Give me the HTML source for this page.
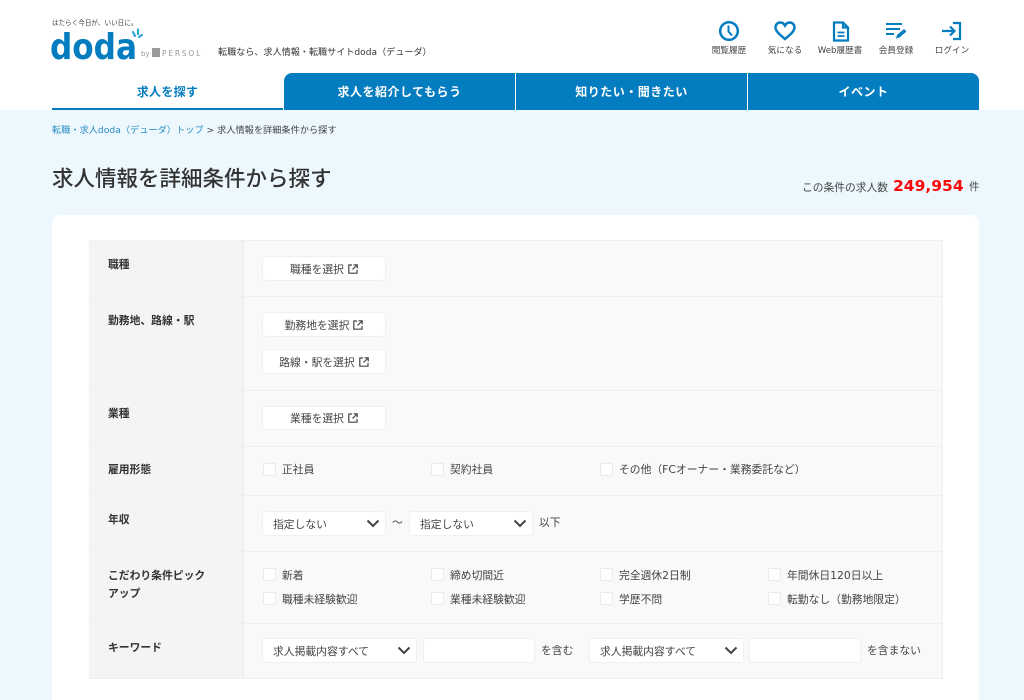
<!DOCTYPE html>
<html lang="ja">
<head>
<meta charset="utf-8">
<title>求人情報を詳細条件から探す</title>
<style>
*{box-sizing:border-box;margin:0;padding:0}
html,body{width:1024px;height:700px;overflow:hidden;background:#fff}
body{position:relative;font-family:"DejaVu Sans","Noto Sans CJK JP",sans-serif;color:#333}
.a{position:absolute;white-space:nowrap}
.bg{position:absolute;left:0;top:110px;width:1024px;height:590px;background:#ecf7fe}
.tab{position:absolute;top:73px;height:37px;background:#047cc0;color:#fff;font-size:12px;font-weight:700;text-align:center;line-height:38px;letter-spacing:.5px}
.hi{position:absolute;top:45px;font-size:8.6px;color:#444;text-align:center;line-height:12px;transform:translateX(-50%);white-space:nowrap}
.card{position:absolute;left:52px;top:215px;width:927px;height:485px;background:#fff;border-radius:8px 8px 0 0}
.table{position:absolute;left:89px;top:240px;width:854px;height:439px;background:#f9f9f9;border:1px solid #f0f0f0}
.th{position:absolute;left:89px;width:155px;background:#f4f4f4;border-right:1px solid #ebebeb}
.line{position:absolute;left:89px;width:854px;height:1px;background:#f0f0f0}
.lbl{position:absolute;left:108px;font-size:10.8px;font-weight:700;color:#333;line-height:17px;white-space:nowrap}
.btn{position:absolute;left:262px;width:124px;height:25px;background:#fff;border:1px solid #f0f0f0;border-radius:3px;font-size:10.8px;color:#444;text-align:center;line-height:25px;white-space:nowrap}
.btn svg{vertical-align:-1px;margin-left:4px}
.chk{position:absolute;width:13px;height:13px;background:#fff;border:1px solid #eaeaea;border-radius:2px}
.t{position:absolute;font-size:10.8px;color:#444;line-height:14px;white-space:nowrap}
.sel{position:absolute;height:25px;background:#fff;border:1px solid #f0f0f0;border-radius:3px;font-size:10.8px;color:#444;line-height:25px;padding-left:10px;white-space:nowrap}
.sel svg{position:absolute;right:5px;top:7px}
.inp{position:absolute;height:25px;background:#fff;border:1px solid #f0f0f0;border-radius:3px}
</style>
</head>
<body>
<div class="bg"></div>

<!-- header -->
<div class="a" style="left:52px;top:18px;font-size:6.6px;color:#444;line-height:10px">はたらく今日が、いい日に。</div>
<svg class="a" style="left:50px;top:26px" width="160" height="38" viewBox="0 0 160 38">
  <text x="0" y="33" font-family="'DejaVu Sans',sans-serif" font-weight="700" font-size="36" fill="#047cc0" textLength="87" lengthAdjust="spacingAndGlyphs">doda</text>
  <path d="M83 6l2 4M88 3.500l0 4.500M92 9l-3 2" stroke="#2da7d8" stroke-width="2.200" fill="none" stroke-linecap="round"/>
  <text x="91" y="30" font-family="'DejaVu Sans',sans-serif" font-size="7" fill="#999">by</text>
  <rect x="102" y="22" width="8" height="9" fill="#999"/>
  <text x="112" y="30" font-family="'DejaVu Sans',sans-serif" font-size="7.500" fill="#999" letter-spacing="1.800">PERSOL</text>
</svg>
<div class="a" style="left:218px;top:46px;font-size:9.1px;color:#333;line-height:14px">転職なら、求人情報・転職サイトdoda（デューダ）</div>

<svg class="a" style="left:718px;top:20px" width="22" height="22" viewBox="0 0 22 22" fill="none" stroke="#047cc0" stroke-width="2.500"><circle cx="11" cy="11" r="8.800"/><path d="M10.500 5.500v6l3.500 4" stroke-width="2"/></svg>
<svg class="a" style="left:774px;top:21px" width="22" height="20" viewBox="0 0 22 20" fill="none" stroke="#047cc0" stroke-width="2.500"><path d="M11 18C5 13 1.500 10 1.500 6.300 1.500 3.500 3.700 1.500 6.200 1.500c2 0 3.700 1 4.800 3 1.100-2 2.800-3 4.800-3 2.500 0 4.700 2 4.700 4.800C20.500 10 17 13 11 18z"/></svg>
<svg class="a" style="left:832px;top:21px" width="18" height="21" viewBox="0 0 18 21" fill="none" stroke="#047cc0" stroke-width="2.200"><path d="M2 1.500h9l5 5v13H2zM11 1.500v5h5"/><path d="M5.500 11.500h7M5.500 15h7" stroke-width="1.800"/></svg>
<svg class="a" style="left:885px;top:22px" width="22" height="18" viewBox="0 0 22 18" fill="none" stroke="#047cc0" stroke-width="2"><path d="M1 2h16M1 7h14M1 12h8"/><path d="M11 16.500l1-3.500 7-6 2.500 2.500-7 6z" fill="#047cc0" stroke="none"/></svg>
<svg class="a" style="left:941px;top:21px" width="22" height="20" viewBox="0 0 22 20" fill="none" stroke="#047cc0" stroke-width="2.200"><path d="M12 2h7v16h-7"/><path d="M1 10h12M9 5.500l4.500 4.500L9 14.500"/></svg>

<div class="hi" style="left:729px">閲覧履歴</div>
<div class="hi" style="left:785px">気になる</div>
<div class="hi" style="left:840px">Web履歴書</div>
<div class="hi" style="left:896px">会員登録</div>
<div class="hi" style="left:952px">ログイン</div>

<!-- nav -->
<div class="a" style="left:52px;top:73px;width:231px;height:37px;text-align:center;font-size:12px;font-weight:700;color:#047cc0;line-height:38px;letter-spacing:.3px;border-bottom:2px solid #047cc0">求人を探す</div>
<div class="tab" style="left:284px;width:231px;border-radius:8px 0 0 0">求人を紹介してもらう</div>
<div class="tab" style="left:516px;width:231px">知りたい・聞きたい</div>
<div class="tab" style="left:748px;width:231px;border-radius:0 8px 0 0">イベント</div>

<!-- breadcrumb -->
<div class="a" style="left:52px;top:124px;font-size:9.2px;line-height:14px;color:#2b8fc2">転職・求人doda（デューダ）トップ<span style="color:#444"> &gt; 求人情報を詳細条件から探す</span></div>

<!-- title -->
<div class="a" style="left:52px;top:165px;font-size:21.5px;font-weight:500;color:#333;line-height:30px">求人情報を詳細条件から探す</div>
<div class="a" style="left:802px;top:180px;font-size:10.75px;color:#444;line-height:15px">この条件の求人数</div>
<div class="a" style="left:893px;top:175px;font-size:15.5px;font-weight:700;color:#f80a0a;line-height:22px">249,954</div>
<div class="a" style="left:969px;top:180px;font-size:10.5px;color:#444;line-height:15px">件</div>

<!-- card -->
<div class="card"></div>
<div class="table"></div>
<div class="th" style="top:241px;height:437px"></div>
<div class="line" style="top:296px"></div>
<div class="line" style="top:390px"></div>
<div class="line" style="top:446px"></div>
<div class="line" style="top:495px"></div>
<div class="line" style="top:551px"></div>
<div class="line" style="top:623px"></div>

<div class="lbl" style="top:256px">職種</div>
<div class="lbl" style="top:312px">勤務地、路線・駅</div>
<div class="lbl" style="top:405px">業種</div>
<div class="lbl" style="top:461px">雇用形態</div>
<div class="lbl" style="top:511px">年収</div>
<div class="lbl" style="top:567px;line-height:17.5px">こだわり条件ピック<br>アップ</div>
<div class="lbl" style="top:639px">キーワード</div>

<div class="btn" style="top:256px">職種を選択<svg width="10" height="10" viewBox="0 0 10 10" fill="none" stroke="#444" stroke-width="1.200"><path d="M4 1H.8v8.200H9V6M5.500.8h3.700v3.700M9 1L4.500 5.500"/></svg></div>
<div class="btn" style="top:312px">勤務地を選択<svg width="10" height="10" viewBox="0 0 10 10" fill="none" stroke="#444" stroke-width="1.200"><path d="M4 1H.8v8.200H9V6M5.500.8h3.700v3.700M9 1L4.500 5.500"/></svg></div>
<div class="btn" style="top:349px">路線・駅を選択<svg width="10" height="10" viewBox="0 0 10 10" fill="none" stroke="#444" stroke-width="1.200"><path d="M4 1H.8v8.200H9V6M5.500.8h3.700v3.700M9 1L4.500 5.500"/></svg></div>
<div class="btn" style="top:406px;height:24px;line-height:23px">業種を選択<svg width="10" height="10" viewBox="0 0 10 10" fill="none" stroke="#444" stroke-width="1.200"><path d="M4 1H.8v8.200H9V6M5.500.8h3.700v3.700M9 1L4.500 5.500"/></svg></div>

<!-- employment -->
<div class="chk" style="left:263px;top:463px"></div><div class="t" style="left:282px;top:463px">正社員</div>
<div class="chk" style="left:431px;top:463px"></div><div class="t" style="left:450px;top:463px">契約社員</div>
<div class="chk" style="left:600px;top:463px"></div><div class="t" style="left:619px;top:463px">その他（FCオーナー・業務委託など）</div>

<!-- salary -->
<div class="sel" style="left:262px;top:511px;width:124px">指定しない<svg width="14" height="9" viewBox="0 0 14 9" fill="none" stroke="#444" stroke-width="2"><path d="M1.500 1.500L7 7l5.500-5.500"/></svg></div>
<div class="t" style="left:392px;top:516px">〜</div>
<div class="sel" style="left:409px;top:511px;width:124px">指定しない<svg width="14" height="9" viewBox="0 0 14 9" fill="none" stroke="#444" stroke-width="2"><path d="M1.500 1.500L7 7l5.500-5.500"/></svg></div>
<div class="t" style="left:539px;top:516px">以下</div>

<!-- pickup -->
<div class="chk" style="left:263px;top:568px"></div><div class="t" style="left:282px;top:569px">新着</div>
<div class="chk" style="left:431px;top:568px"></div><div class="t" style="left:450px;top:569px">締め切間近</div>
<div class="chk" style="left:600px;top:568px"></div><div class="t" style="left:619px;top:569px">完全週休2日制</div>
<div class="chk" style="left:768px;top:568px"></div><div class="t" style="left:787px;top:569px">年間休日120日以上</div>
<div class="chk" style="left:263px;top:592px"></div><div class="t" style="left:282px;top:593px">職種未経験歓迎</div>
<div class="chk" style="left:431px;top:592px"></div><div class="t" style="left:450px;top:593px">業種未経験歓迎</div>
<div class="chk" style="left:600px;top:592px"></div><div class="t" style="left:619px;top:593px">学歴不問</div>
<div class="chk" style="left:768px;top:592px"></div><div class="t" style="left:787px;top:593px">転勤なし（勤務地限定）</div>

<!-- keyword -->
<div class="sel" style="left:262px;top:638px;width:155px">求人掲載内容すべて<svg width="14" height="9" viewBox="0 0 14 9" fill="none" stroke="#444" stroke-width="2"><path d="M1.500 1.500L7 7l5.500-5.500"/></svg></div>
<div class="inp" style="left:423px;top:638px;width:112px"></div>
<div class="t" style="left:541px;top:644px">を含む</div>
<div class="sel" style="left:589px;top:638px;width:155px">求人掲載内容すべて<svg width="14" height="9" viewBox="0 0 14 9" fill="none" stroke="#444" stroke-width="2"><path d="M1.500 1.500L7 7l5.500-5.500"/></svg></div>
<div class="inp" style="left:749px;top:638px;width:112px"></div>
<div class="t" style="left:867px;top:644px">を含まない</div>
</body>
</html>
